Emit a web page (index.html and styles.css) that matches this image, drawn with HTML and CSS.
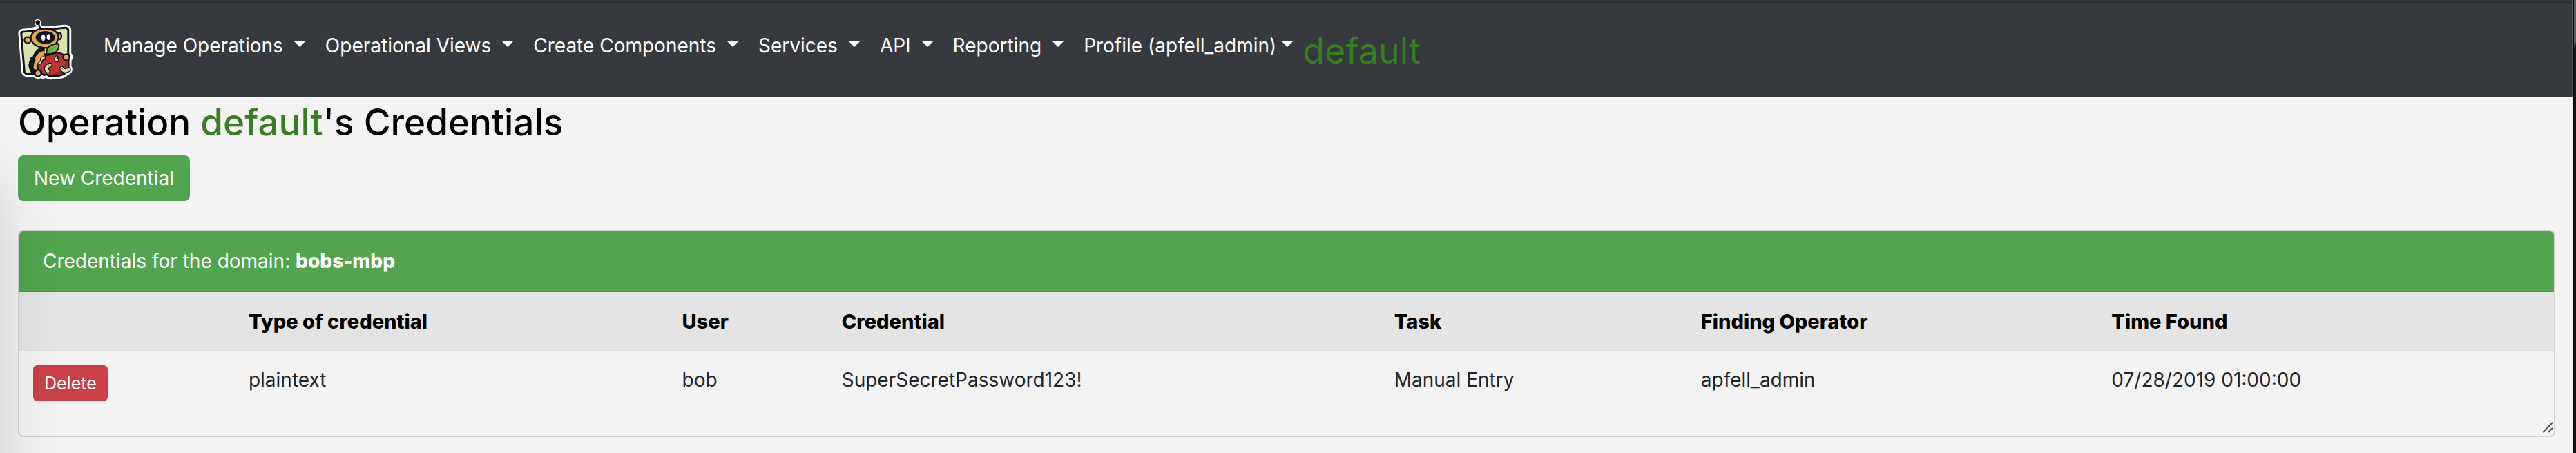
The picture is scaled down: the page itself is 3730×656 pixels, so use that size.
FILE: index.html
```html
<!DOCTYPE html>
<html lang="en">
<head>
<meta charset="utf-8">
<title>Credentials</title>
<link rel="stylesheet" href="styles.css">
</head>
<body>
<div class="desktop">
<div class="window">
<header class="navbar">
  <a class="brand" href="#" aria-label="Home">
    <svg class="logo" viewBox="78 84 246 270" aria-hidden="true">
      <g fill="#fff" stroke="#fff" stroke-width="17" stroke-linejoin="round">
        <circle cx="170" cy="101" r="6"/>
        <path d="M172 101l8 24" fill="none"/>
        <path d="M94 150Q92 138 105 137L140 134Q170 120 200 126L288 119Q307 119 307 136V236Q320 250 308 264L308 292Q320 312 296 322Q275 341 248 336Q225 345 205 333Q190 340 182 332Q168 345 154 328L124 328Q109 328 107 312Z"/>
      </g>
      <path d="M94 150Q92 138 105 137L140 134L288 119Q307 119 307 136V300L160 328H124Q109 328 107 312Z" fill="#0e131f"/>
      <path d="M103 152Q102 146 109 145L288 128Q298 128 298 138V300L160 320H127Q117 320 116 311Z" fill="#dae3ad"/>
      <path d="M172 103l10 25" stroke="#0e131f" stroke-width="7"/>
      <circle cx="170" cy="101" r="10" fill="#0e131f"/>
      <path d="M190 205Q150 222 145 262Q126 282 140 318H200V205Z" fill="#0e131f"/>
      <path d="M145 258Q127 285 142 310" fill="none" stroke="#0e131f" stroke-width="10"/>
      <path d="M198 224Q166 228 157 260L151 296L160 310L172 290L205 240Z" fill="#e5a355"/>
      <ellipse cx="148" cy="262" rx="12" ry="14" fill="#0e131f"/>
      <g fill="#e5a355" stroke="#0e131f" stroke-width="7">
        <ellipse cx="263" cy="160" rx="10" ry="14"/>
        <path d="M139 166Q147 128 200 128Q257 128 260 166Q254 209 204 211Q146 208 139 166Z"/>
        <circle cx="126" cy="177" r="14"/>
      </g>
      <ellipse cx="203" cy="166" rx="42" ry="28" fill="#0e131f"/>
      <ellipse cx="194" cy="166" rx="8" ry="14" fill="#fff"/>
      <ellipse cx="217" cy="164" rx="8" ry="13" fill="#fff"/>
      <path d="M200 238Q213 246 231 237Q259 226 280 240Q307 249 303 278Q307 320 272 329Q253 338 240 332Q220 338 208 326Q190 333 184 315Q164 303 170 282L184 278L188 264L202 260Z" fill="#bd3331" stroke="#0e131f" stroke-width="8" stroke-linejoin="round"/>
      <path d="M295 265Q301 309 269 326Q250 333 235 326Q281 316 295 265Z" fill="#8e292c"/>
      <path d="M200 240l2 18-12 6-3 14-18 8 2-10 10-7 1-14 11-7Z" fill="#f0d0b2" stroke="#0e131f" stroke-width="3"/>
      <path d="M209 236Q202 197 261 193Q266 237 212 238Z" fill="#7fb241" stroke="#0e131f" stroke-width="6" stroke-linejoin="round"/>
      <path d="M214 233Q225 216 246 207" fill="none" stroke="#4c7a2b" stroke-width="3"/>
      <g fill="none" stroke-linecap="round" stroke-linejoin="round">
        <path d="M223 285Q197 297 214 312M252 263V254M274 300Q283 317 304 306" stroke="#0e131f" stroke-width="21"/>
        <path d="M223 285Q197 297 214 312M252 263V254M274 300Q283 317 304 306" stroke="#d2dc9f" stroke-width="13"/>
      </g>
      <circle cx="255" cy="255" r="4" fill="#0e131f"/>
      <circle cx="218" cy="286" r="3" fill="#8c9468"/>
      <circle cx="276" cy="300" r="3" fill="#8c9468"/>
      <g fill="#e5a355" stroke="#0e131f" stroke-width="7">
        <circle cx="294" cy="252" r="14"/>
        <circle cx="171" cy="321" r="14"/>
      </g>
    </svg>
  </a>
  <nav class="menu">
    <a class="menu-link" href="#">Manage Operations</a>
    <a class="menu-link" href="#">Operational Views</a>
    <a class="menu-link" href="#">Create Components</a>
    <a class="menu-link" href="#">Services</a>
    <a class="menu-link" href="#">API</a>
    <a class="menu-link" href="#">Reporting</a>
    <a class="menu-link menu-link-profile" href="#">Profile (apfell_admin)</a>
  </nav>
  <span class="current-operation">default</span>
</header>
<main class="content">
  <h1 class="title">Operation <span class="operation">default</span>'s Credentials</h1>
  <button class="btn btn-new" type="button">New Credential</button>
  <section class="card">
    <h2 class="card-header">Credentials for the domain: <b>bobs-mbp</b></h2>
    <table class="table">
      <colgroup>
        <col class="col-action"><col class="col-type"><col class="col-user"><col class="col-credential"><col class="col-task"><col class="col-operator"><col class="col-time">
      </colgroup>
      <thead>
        <tr><th></th><th>Type of credential</th><th>User</th><th>Credential</th><th>Task</th><th>Finding Operator</th><th>Time Found</th></tr>
      </thead>
      <tbody>
        <tr>
          <td><button class="btn btn-delete" type="button">Delete</button></td>
          <td>plaintext</td><td>bob</td><td>SuperSecretPassword123!</td><td>Manual Entry</td><td>apfell_admin</td><td>07/28/2019 01:00:00</td>
        </tr>
      </tbody>
    </table>
    <svg class="grip" viewBox="0 0 16 16" aria-hidden="true"><path d="M1 15L15 1M9 15L15 9" stroke="#555" stroke-width="2"/></svg>
  </section>
</main>
</div>
<div class="window-edge"></div>
</div>
</body>
</html>
```
FILE: styles.css
```css
* { box-sizing: border-box; }

body {
  margin: 0;
  background: #f3f3f3;
  color: #212529;
  font-family: Inter, "Liberation Sans", sans-serif;
  font-size: 28px;
  line-height: 42px;
}

.desktop {
  display: flex;
  min-height: 100vh;
}

.window {
  position: relative;
  flex: 1;
  min-width: 0;
}

/* soft shade along the left side of the window */
.window::after {
  content: "";
  position: absolute;
  inset: 200px auto 0 0;
  width: 90px;
  background: linear-gradient(to right, rgba(0, 0, 0, 0.08), rgba(0, 0, 0, 0.03) 35%, transparent);
  mask-image: linear-gradient(to bottom, transparent, #000 150px);
  pointer-events: none;
}

.window-edge {
  width: 4px;
  border-left: 1px solid #000;
  background: linear-gradient(#5d5c62, #5d5c62 60px, #17181a 68px);
}

.navbar {
  display: flex;
  align-items: center;
  height: 140px;
  padding: 4px 24px 0;
  border-right: 2px solid #55595c;
  background: linear-gradient(#33373a 3px, #25282a 3px, #25282a 4px, #363a3e 4px);
}

.brand { display: flex; }

.logo {
  width: 82px;
  height: 90px;
}

.menu {
  display: flex;
  gap: 29px;
  padding: 0 14px 12px 44px;
}

.menu-link {
  display: flex;
  align-items: center;
  gap: 16px;
  color: #fff;
  text-decoration: none;
  white-space: nowrap;
}

.menu-link::after {
  content: "";
  margin-bottom: 4px;
  border: 8px solid transparent;
  border-top-color: #fff;
  border-bottom: 0;
}

.menu-link-profile { gap: 8px; }

.current-operation {
  padding-top: 4px;
  color: #377e22;
  font-size: 52px;
  line-height: 64px;
}

.content { padding: 5px 26px 24px; }

.title {
  margin: 0 0 16px;
  color: #000;
  font-size: 53px;
  font-weight: 500;
  line-height: 64px;
}

.operation { color: #377e22; }

.btn {
  display: block;
  border: 0;
  border-radius: 8px;
  color: #fff;
  font-family: inherit;
}

.btn-new {
  padding: 12px 23px;
  background: #52a44f;
  font-size: 28px;
  line-height: 42px;
}

.btn-delete {
  padding: 8px 16px;
  border-radius: 6px;
  background: #c94147;
  font-size: 25px;
  line-height: 36px;
}

.card {
  position: relative;
  margin-top: 42px;
  padding-bottom: 30px;
  border: 2px solid #d3d3d3;
  border-radius: 8px;
  overflow: hidden;
}

.card-header {
  margin: 0;
  padding: 22px 34px;
  border-bottom: 2px solid #4a9347;
  background: #52a44f;
  color: #fff;
  font-size: 28px;
  font-weight: 400;
  line-height: 42px;
}

.card-header b { font-weight: 800; }

.table {
  width: 100%;
  border-collapse: collapse;
  table-layout: fixed;
}

.table th,
.table td {
  padding: 20px;
  text-align: left;
  vertical-align: top;
}

.table th {
  padding-top: 22px;
  border-bottom: 2px solid #dee2e6;
  background: #e4e4e4;
  color: #000;
  font-size: 29px;
  font-weight: 800;
}

.col-action { width: 8.5%; }
.col-type { width: 17.1%; }
.col-user { width: 6.3%; }
.col-credential { width: 21.8%; }
.col-task { width: 12.1%; }
.col-operator { width: 16.2%; }
.col-time { width: 18%; }

.grip {
  position: absolute;
  right: 1px;
  bottom: 4px;
  width: 16px;
  height: 16px;
}
```
